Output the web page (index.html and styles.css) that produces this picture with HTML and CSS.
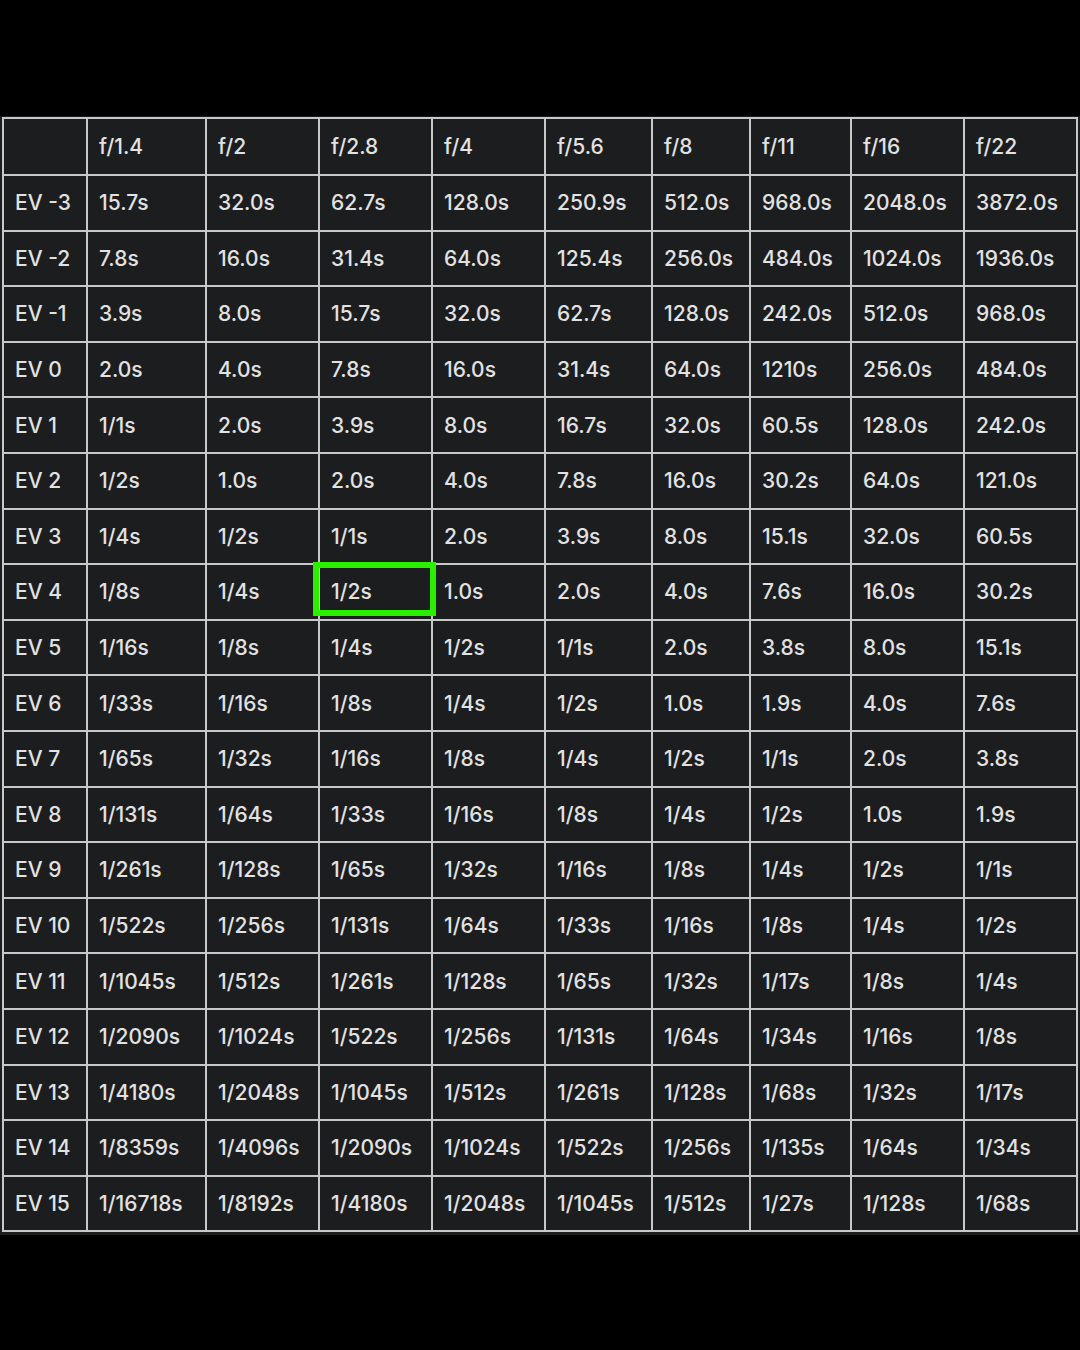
FILE: index.html
```html
<!DOCTYPE html>
<html lang="en">
<head>
<meta charset="utf-8">
<title>EV exposure table</title>
<link rel="stylesheet" href="styles.css">
</head>
<body>
<div class="page">
  <div class="sheet">
    <table class="ev">
      <colgroup>
        <col class="c0"><col class="c1"><col class="c2"><col class="c3"><col class="c4"><col class="c5"><col class="c6"><col class="c7"><col class="c8"><col class="c9">
      </colgroup>
      <thead>
        <tr class="head"><th></th><th>f/1.4</th><th>f/2</th><th>f/2.8</th><th>f/4</th><th>f/5.6</th><th>f/8</th><th>f/11</th><th>f/16</th><th>f/22</th></tr>
      </thead>
      <tbody>
        <tr><td>EV -3</td><td>15.7s</td><td>32.0s</td><td>62.7s</td><td>128.0s</td><td>250.9s</td><td>512.0s</td><td>968.0s</td><td>2048.0s</td><td>3872.0s</td></tr>
        <tr><td>EV -2</td><td>7.8s</td><td>16.0s</td><td>31.4s</td><td>64.0s</td><td>125.4s</td><td>256.0s</td><td>484.0s</td><td>1024.0s</td><td>1936.0s</td></tr>
        <tr><td>EV -1</td><td>3.9s</td><td>8.0s</td><td>15.7s</td><td>32.0s</td><td>62.7s</td><td>128.0s</td><td>242.0s</td><td>512.0s</td><td>968.0s</td></tr>
        <tr><td>EV 0</td><td>2.0s</td><td>4.0s</td><td>7.8s</td><td>16.0s</td><td>31.4s</td><td>64.0s</td><td>1210s</td><td>256.0s</td><td>484.0s</td></tr>
        <tr><td>EV 1</td><td>1/1s</td><td>2.0s</td><td>3.9s</td><td>8.0s</td><td>16.7s</td><td>32.0s</td><td>60.5s</td><td>128.0s</td><td>242.0s</td></tr>
        <tr><td>EV 2</td><td>1/2s</td><td>1.0s</td><td>2.0s</td><td>4.0s</td><td>7.8s</td><td>16.0s</td><td>30.2s</td><td>64.0s</td><td>121.0s</td></tr>
        <tr><td>EV 3</td><td>1/4s</td><td>1/2s</td><td>1/1s</td><td>2.0s</td><td>3.9s</td><td>8.0s</td><td>15.1s</td><td>32.0s</td><td>60.5s</td></tr>
        <tr><td>EV 4</td><td>1/8s</td><td>1/4s</td><td>1/2s</td><td>1.0s</td><td>2.0s</td><td>4.0s</td><td>7.6s</td><td>16.0s</td><td>30.2s</td></tr>
        <tr><td>EV 5</td><td>1/16s</td><td>1/8s</td><td>1/4s</td><td>1/2s</td><td>1/1s</td><td>2.0s</td><td>3.8s</td><td>8.0s</td><td>15.1s</td></tr>
        <tr><td>EV 6</td><td>1/33s</td><td>1/16s</td><td>1/8s</td><td>1/4s</td><td>1/2s</td><td>1.0s</td><td>1.9s</td><td>4.0s</td><td>7.6s</td></tr>
        <tr><td>EV 7</td><td>1/65s</td><td>1/32s</td><td>1/16s</td><td>1/8s</td><td>1/4s</td><td>1/2s</td><td>1/1s</td><td>2.0s</td><td>3.8s</td></tr>
        <tr><td>EV 8</td><td>1/131s</td><td>1/64s</td><td>1/33s</td><td>1/16s</td><td>1/8s</td><td>1/4s</td><td>1/2s</td><td>1.0s</td><td>1.9s</td></tr>
        <tr><td>EV 9</td><td>1/261s</td><td>1/128s</td><td>1/65s</td><td>1/32s</td><td>1/16s</td><td>1/8s</td><td>1/4s</td><td>1/2s</td><td>1/1s</td></tr>
        <tr><td>EV 10</td><td>1/522s</td><td>1/256s</td><td>1/131s</td><td>1/64s</td><td>1/33s</td><td>1/16s</td><td>1/8s</td><td>1/4s</td><td>1/2s</td></tr>
        <tr><td>EV 11</td><td>1/1045s</td><td>1/512s</td><td>1/261s</td><td>1/128s</td><td>1/65s</td><td>1/32s</td><td>1/17s</td><td>1/8s</td><td>1/4s</td></tr>
        <tr><td>EV 12</td><td>1/2090s</td><td>1/1024s</td><td>1/522s</td><td>1/256s</td><td>1/131s</td><td>1/64s</td><td>1/34s</td><td>1/16s</td><td>1/8s</td></tr>
        <tr><td>EV 13</td><td>1/4180s</td><td>1/2048s</td><td>1/1045s</td><td>1/512s</td><td>1/261s</td><td>1/128s</td><td>1/68s</td><td>1/32s</td><td>1/17s</td></tr>
        <tr><td>EV 14</td><td>1/8359s</td><td>1/4096s</td><td>1/2090s</td><td>1/1024s</td><td>1/522s</td><td>1/256s</td><td>1/135s</td><td>1/64s</td><td>1/34s</td></tr>
        <tr><td>EV 15</td><td>1/16718s</td><td>1/8192s</td><td>1/4180s</td><td>1/2048s</td><td>1/1045s</td><td>1/512s</td><td>1/27s</td><td>1/128s</td><td>1/68s</td></tr>
      </tbody>
    </table>
    <div class="highlight"></div>
  </div>
</div>
</body>
</html>
```

FILE: styles.css
```css
html, body {
  margin: 0;
  padding: 0;
  background: #000;
}

.page {
  width: 1080px;
  height: 1350px;
  padding-top: 116px;
  box-sizing: border-box;
  background: #000;
}

.sheet {
  position: relative;
  width: 1080px;
  padding: 1px 0 3px 2px;
  box-sizing: border-box;
  background: #1c1d1f;
}

.ev {
  border-collapse: collapse;
  table-layout: fixed;
  width: 1076px;
  font-family: Inter, "Noto Sans", "Liberation Sans", sans-serif;
  font-size: 21px;
  font-weight: 500;
  color: #e2e2e2;
  background: #1c1d1f;
}

.c0 { width: 84px; }
.c1 { width: 119px; }
.c2 { width: 113px; }
.c3 { width: 113px; }
.c4 { width: 113px; }
.c5 { width: 107px; }
.c6 { width: 98px; }
.c7 { width: 101px; }
.c8 { width: 113px; }
.c9 { width: 113px; }

.ev th,
.ev td {
  border: 2px solid #c8c8c8;
  padding: 0 0 0 11px;
  text-align: left;
  vertical-align: middle;
  font-weight: 500;
  white-space: nowrap;
}

.ev tr {
  height: 55.6px;
}

.ev tr.head {
  height: 57px;
}

.highlight {
  position: absolute;
  left: 313px;
  top: 446px;
  width: 123px;
  height: 54px;
  box-sizing: border-box;
  border: 6px solid #2af000;
  pointer-events: none;
}
```
